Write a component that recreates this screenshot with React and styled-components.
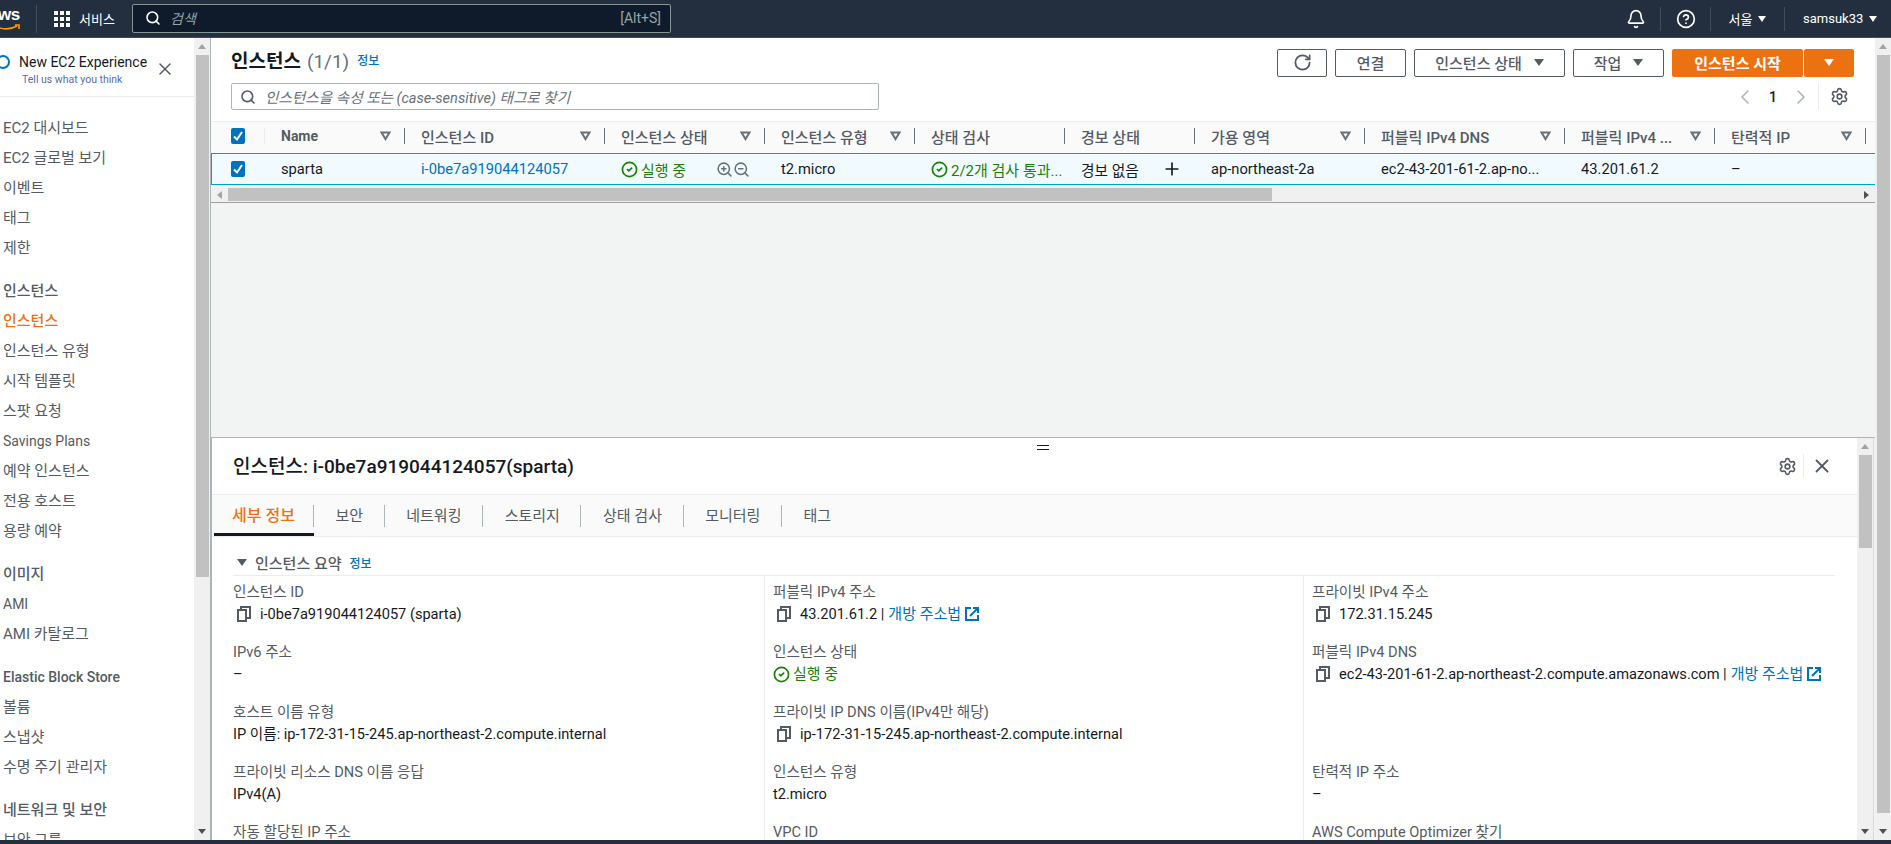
import React from 'react';
import styled, { createGlobalStyle } from 'styled-components';
import { Bell, CircleHelp, Search, X, RotateCw, Settings, ChevronLeft, ChevronRight, CircleCheck, ZoomIn, ZoomOut, Plus } from 'lucide-react';

const GlobalStyle = createGlobalStyle`
    html, body {
        margin: 0;
        padding: 0;
        overflow: hidden;
        background: #f2f3f3;
    }
    body, input, button {
        font-family: Roboto, "Noto Sans CJK KR", sans-serif;
        font-size: 14px;
        color: #16191f;
    }
    * { box-sizing: border-box; }
`

const Page = styled.div`
    width: 1891px;
    height: 844px;
    display: flex;
    flex-direction: column;
    overflow: hidden;
`

/* top navigation */
const NavBar = styled.div`
    height: 38px;
    flex: none;
    display: flex;
    align-items: center;
    background: #232f3e;
    border-bottom: 1px solid #414d5c;
    color: #fff;
`
const LogoBox = styled.div`
    width: 37px;
    height: 28px;
    flex: none;
    overflow: hidden;
    position: relative;
    border-right: 1px solid #414d5c;
    svg { position: absolute; left: 0; top: 19px; }
`
const LogoText = styled.span`
    display: block;
    margin: -2px 0 0 -11px;
    font: 700 17px/24px "Liberation Sans", sans-serif;
    letter-spacing: -0.5px;
`
const ServicesButton = styled.div`
    display: flex;
    align-items: center;
    gap: 9px;
    margin-left: 17px;
    width: 78px;
    font-size: 13px;
`
const GridIcon = styled.div`
    display: grid;
    grid-template-columns: repeat(3, 4px);
    grid-auto-rows: 4px;
    gap: 2px;
    i { background: #fff; }
`
const SearchBox = styled.div`
    width: 539px;
    height: 29px;
    display: flex;
    align-items: center;
    padding: 0 9px 0 12px;
    background: #0f1b2a;
    border: 1px solid #879596;
    border-radius: 2px;
    margin-bottom: 1px;
    span { color: #95a5a6; }
`
const SearchHint = styled.em`
    flex: 1;
    margin-left: 9px;
    color: #95a5a6;
    font-size: 14px;
`
const NavRight = styled.div`
    margin-left: auto;
    display: flex;
    align-items: center;
    height: 100%;
`
const NavCell = styled.div`
    height: 24px;
    width: ${p => p.$w}px;
    display: flex;
    align-items: center;
    justify-content: ${p => p.$last ? 'flex-start' : 'center'};
    padding-left: ${p => p.$last ? 18 : 0}px;
    gap: 6px;
    font-size: 13px;
    border-right: ${p => p.$last ? 'none' : '1px solid #414d5c'};
`
const Caret = styled.i`
    width: 0;
    height: 0;
    display: inline-block;
    border-left: ${p => p.$size || 4}px solid transparent;
    border-right: ${p => p.$size || 4}px solid transparent;
    border-top: ${p => (p.$size || 4) + 2}px solid ${p => p.$color || '#fff'};
`

/* page body */
const Body = styled.div`
    flex: 1;
    min-height: 0;
    display: flex;
`
const BottomStrip = styled.div`
    height: 4px;
    flex: none;
    background: #232f3e;
`
const Sidebar = styled.aside`
    width: 194px;
    flex: none;
    background: #fff;
    overflow: hidden;
`
const Banner = styled.div`
    height: 59px;
    display: flex;
    align-items: center;
    border-bottom: 1px solid #eaeded;
`
const BannerRing = styled.div`
    width: 14px;
    height: 14px;
    flex: none;
    margin: -11px 0 0 -4px;
    border: 2px solid #0073bb;
    border-radius: 50%;
`
const BannerText = styled.div`
    margin-left: 9px;
    padding-top: 6px;
    width: 136px;
    strong { display: block; font-weight: 400; font-size: 14px; line-height: 20px; color: #16191f; white-space: nowrap; }
    a { display: block; margin: 0 0 0 3px; font-size: 10.5px; line-height: 16px; color: #5a6bb0; white-space: nowrap; }
`
const BannerClose = styled.div`
    color: #545b64;
    display: flex;
    margin-top: 4px;
`
const SideNav = styled.nav`
    padding: 16px 0 0 3px;
`
const SideTitle = styled.div`
    height: 30px;
    line-height: 30px;
    margin-top: 13px;
    font-size: ${p => p.$latin ? 14 : 15}px;
    font-weight: 500;
    color: #545b64;
    white-space: nowrap;
`
const SideItem = styled.div`
    height: 30px;
    line-height: 30px;
    font-size: ${p => p.$latin ? 14 : 15}px;
    color: ${p => p.$active ? '#ec7211' : '#545b64'};
    font-weight: ${p => p.$active ? 500 : 400};
    white-space: nowrap;
`

/* browser style scrollbars */
const ScrollTrack = styled.div`
    width: ${p => p.$w || 16}px;
    flex: none;
    display: flex;
    flex-direction: column;
    align-items: center;
    background: #f0f0f0;
    border-right: ${p => p.$line ? '1px solid #aab7b8' : 'none'};
`
const ScrollThumb = styled.div`
    width: 13px;
    height: ${p => p.$h}px;
    background: #c1c1c1;
    flex: none;
`
const ScrollArrow = styled.div`
    height: ${p => p.$h || 17}px;
    flex: none;
    display: flex;
    align-items: center;
    justify-content: center;
    margin-top: ${p => p.$auto ? 'auto' : 0};
    i {
        width: 0;
        height: 0;
        border-left: 4px solid transparent;
        border-right: 4px solid transparent;
        ${p => p.$up ? 'border-bottom: 5px solid #a3a3a3;' : 'border-top: 5px solid #505050;'}
    }
`

/* content */
const Content = styled.main`
    flex: 1;
    min-width: 0;
    display: flex;
    flex-direction: column;
    background: #f2f3f3;
`
const TopPane = styled.section`
    height: 400px;
    flex: none;
    border-bottom: 1px solid #aab7b8;
`
const PaneHeader = styled.div`
    height: 83px;
    padding: 11px 21px 0 20px;
    display: flex;
    justify-content: space-between;
    background: #fff;
`
const HeaderLeft = styled.div`
    width: 648px;
`
const TitleRow = styled.div`
    height: 28px;
    display: flex;
    align-items: center;
    margin: -4px 0 10px;
`
const PageTitle = styled.h1`
    margin: 0;
    font-size: 19px;
    font-weight: 700;
    color: #16191f;
    span { font-weight: 400; color: #687078; margin-left: 6px; }
`
const InfoLink = styled.a`
    margin-left: ${p => p.$ml || 8}px;
    font-size: 12px;
    font-weight: 500;
    color: #0073bb;
`
const FilterBox = styled.div`
    height: 27px;
    display: flex;
    align-items: center;
    gap: 9px;
    padding-left: 8px;
    border: 1px solid #aab7b8;
    border-radius: 2px;
    color: #545b64;
    em { font-size: 14.6px; color: #687078; }
`
const HeaderRight = styled.div`
    display: flex;
    flex-direction: column;
    align-items: flex-end;
`
const ButtonRow = styled.div`
    display: flex;
    gap: 8px;
    height: 28px;
    margin-bottom: 6px;
`
const Button = styled.button`
    width: ${p => p.$w}px;
    height: 28px;
    display: flex;
    align-items: center;
    justify-content: center;
    gap: 12px;
    padding: 0 0 2px;
    background: #fff;
    border: 1px solid #545b64;
    border-radius: 2px;
    color: #545b64;
    font-size: 15px;
    font-weight: 500;
`
const SplitButton = styled.div`
    display: flex;
    gap: 1px;
`
const PrimaryButton = styled(Button)`
    background: #ec7211;
    border: none;
    color: #fff;
    font-weight: 700;
`
const Pagination = styled.div`
    height: 27px;
    display: flex;
    align-items: center;
    color: #16191f;
    padding-right: 5px;
    b { width: 32px; text-align: center; font-weight: 500; }
`
const PagerDivider = styled.i`
    width: 1px;
    height: 27px;
    margin: 0 11px 0 5px;
    background: #eaeded;
`

/* instance table */
const columns = '54px 140px 200px 160px 150px 150px 130px 170px 200px 150px 151px 9px'

const TableRow = styled.div`
    display: grid;
    grid-template-columns: ${columns};
    height: ${p => p.$h}px;
    align-items: center;
`
const HeadRow = styled(TableRow)`
    background: #fafafa;
    border-top: 1px solid #eaeded;
    padding-bottom: 3px;
`
const BodyRow = styled(TableRow)`
    background: #f1faff;
    border-top: 1px solid #00a1c9;
    border-bottom: 1px solid #00a1c9;
    border-left: 1px solid #00a1c9;
    font-size: 14.7px;
`
const CheckCell = styled.div`
    display: flex;
    align-items: center;
    padding-left: ${p => p.$pl || 20}px;
    height: 16px;
    border-right: ${p => p.$line ? '1px solid #eaeded' : 'none'};
`
const CheckBox = styled.div`
    width: 14px;
    height: 16px;
    display: flex;
    align-items: center;
    justify-content: center;
    background: #0073bb;
    border-radius: 2px;
`
const HeadCell = styled.div`
    height: 16px;
    display: flex;
    align-items: center;
    padding: 0 13px 0 16px;
    border-right: 1px solid #687078;
    color: #545b64;
    font-size: 15px;
    white-space: nowrap;
    span {
        flex: 1;
        font-weight: ${p => p.$latin ? 700 : 500};
        font-size: ${p => p.$latin ? 14 : 15}px;
    }
`
const Cell = styled.div`
    display: flex;
    align-items: center;
    padding-left: 15px;
    white-space: nowrap;
    color: ${p => p.$color || '#16191f'};
`
const StatusIcon = styled.span`
    display: flex;
    color: #1d8102;
    margin-right: ${p => p.$mr || 3}px;
`
const StatusText = styled.span`
    color: #1d8102;
    font-size: 15px;
`
const ZoomIcons = styled.span`
    display: flex;
    color: #687078;
    margin-left: 30px;
`
const PlusIcon = styled.span`
    display: flex;
    margin-left: 23px;
    color: #16191f;
`
const TableScroll = styled.div`
    height: 16px;
    margin-top: 2px;
    display: flex;
    align-items: center;
    background: #f0f0f0;
    border-bottom: 1px solid #a0a0a0;
`
const HArrow = styled.div`
    width: 17px;
    flex: none;
    display: flex;
    justify-content: center;
    margin-left: ${p => p.$auto ? 'auto' : 0};
    i {
        width: 0;
        height: 0;
        border-top: 4px solid transparent;
        border-bottom: 4px solid transparent;
        ${p => p.$left ? 'border-right: 5px solid #a3a3a3;' : 'border-left: 5px solid #505050;'}
    }
`
const HThumb = styled.div`
    width: 1044px;
    height: 13px;
    background: #c1c1c1;
`

/* detail panel */
const DetailPane = styled.section`
    flex: 1;
    min-height: 0;
    display: flex;
    margin-right: 1px;
    background: #fff;
    border-left: 1px solid #aab7b8;
    border-right: 1px solid #d5dbdb;
    position: relative;
`
const DragHandle = styled.div`
    position: absolute;
    left: 825px;
    top: 7px;
    width: 12px;
    height: 5px;
    border-top: 1px solid #16191f;
    border-bottom: 1px solid #16191f;
`
const DetailMain = styled.div`
    flex: 1;
    min-width: 0;
    overflow: hidden;
`
const DetailHeader = styled.div`
    height: 56px;
    display: flex;
    align-items: center;
    padding: 0 24px 0 21px;
`
const DetailTitle = styled.h2`
    margin: -3px 0 0;
    flex: 1;
    font-size: 19px;
    font-weight: 500;
    color: #16191f;
`
const HeaderIcons = styled.div`
    display: flex;
    align-items: center;
    color: #545b64;
`
const IconDivider = styled.i`
    width: 1px;
    height: 24px;
    margin: 0 7px 0 6px;
    background: #eaeded;
`
const Tabs = styled.div`
    height: 43px;
    display: flex;
    align-items: center;
    padding-left: 2px;
    background: #fafafa;
    border-top: 1px solid #eaeded;
    border-bottom: 1px solid #eaeded;
`
const Tab = styled.div`
    height: 100%;
    padding: 0 ${p => p.$active ? '19px 0 18px' : '21.6px'};
    display: flex;
    align-items: center;
    position: relative;
    font-size: ${p => p.$active ? 16 : 15}px;
    font-weight: ${p => p.$active ? 500 : 400};
    color: ${p => p.$active ? '#ec7211' : '#545b64'};
    border-bottom: 3px solid ${p => p.$active ? '#16191f' : 'transparent'};
    &:not(:last-child)::after {
        content: "";
        position: absolute;
        right: 0;
        top: 10px;
        height: 22px;
        width: 1px;
        background: #aab7b8;
    }
`
const Summary = styled.div`
    padding: 13px 22px 0 21px;
`
const SummaryHead = styled.div`
    height: 25px;
    display: flex;
    align-items: center;
    padding-left: 4px;
    font-size: 15px;
    font-weight: 500;
    color: #545b64;
    i { margin-right: 8px; }
`
const FieldGrid = styled.div`
    display: grid;
    grid-template-columns: 531px 539px 1fr;
    border-top: 1px solid #eaeded;
    padding-top: 5px;
`
const FieldCol = styled.div`
    padding-left: ${p => p.$first ? 0 : 8}px;
    border-left: ${p => p.$first ? 'none' : '1px solid #eaeded'};
    margin-top: -5px;
    padding-top: 5px;
`
const Field = styled.div`
    height: 60px;
    white-space: nowrap;
`
const FieldLabel = styled.div`
    height: 22px;
    padding-top: 1px;
    line-height: 21px;
    color: #545b64;
    font-size: 14.6px;
`
const FieldValue = styled.div`
    height: 22px;
    line-height: 22px;
    display: flex;
    align-items: center;
    color: #16191f;
    font-size: 14.6px;
`
const CopyWrap = styled.span`
    display: flex;
    margin: 0 9px 0 4px;
    color: #545b64;
`
const OpenLink = styled.a`
    display: inline-flex;
    align-items: center;
    gap: 4px;
    margin-left: 4px;
    font-size: 15px;
    color: #0073bb;
`

const CopyIcon = () => (
    <svg width="14" height="16" viewBox="0 0 14 16" fill="none" stroke="currentColor" strokeWidth="2">
        <rect x="1" y="4" width="8" height="11" />
        <path d="M4 4V1h9v11H9" />
    </svg>
)

const ExternalIcon = () => (
    <svg width="14" height="14" viewBox="0 0 14 14" fill="none" stroke="currentColor" strokeWidth="2">
        <path d="M6 1H1v12h12V8" />
        <path d="M5 9l8-8M8 1h5v5" />
    </svg>
)

const FilterIcon = () => (
    <svg width="11" height="10" viewBox="0 0 11 10" fill="none" stroke="#687078" strokeWidth="2">
        <path d="M1.5 1.5h8L5.5 8z" />
    </svg>
)

const TickIcon = () => (
    <svg width="12" height="12" viewBox="0 0 12 12" fill="none" stroke="#fff" strokeWidth="2">
        <path d="M2 6.5L5 9.5L10 2" />
    </svg>
)

const Running = () => (
    <>
        <StatusIcon><CircleCheck size={17} strokeWidth={2.4} /></StatusIcon>
        <StatusText>실행 중</StatusText>
    </>
)

const headers = [
    ['Name', true], ['인스턴스 ID', true], ['인스턴스 상태', true], ['인스턴스 유형', true],
    ['상태 검사', false], ['경보 상태', false], ['가용 영역', true], ['퍼블릭 IPv4 DNS', true],
    ['퍼블릭 IPv4 ...', true], ['탄력적 IP', true],
]

const latinLabels = ['Savings Plans', 'AMI', 'Elastic Block Store']

const sideGroups = [
    { items: ['EC2 대시보드', 'EC2 글로벌 보기', '이벤트', '태그', '제한'] },
    { title: '인스턴스', items: ['인스턴스', '인스턴스 유형', '시작 템플릿', '스팟 요청', 'Savings Plans', '예약 인스턴스', '전용 호스트', '용량 예약'] },
    { title: '이미지', items: ['AMI', 'AMI 카탈로그'] },
    { title: 'Elastic Block Store', items: ['볼륨', '스냅샷', '수명 주기 관리자'] },
    { title: '네트워크 및 보안', items: ['보안 그룹'] },
]

const tabs = ['세부 정보', '보안', '네트워킹', '스토리지', '상태 검사', '모니터링', '태그']

const dns = 'ec2-43-201-61-2.ap-northeast-2.compute.amazonaws.com'
const privateDns = 'ip-172-31-15-245.ap-northeast-2.compute.internal'

const fieldCols = [
    [
        { label: '인스턴스 ID', value: 'i-0be7a919044124057 (sparta)', copy: true },
        { label: 'IPv6 주소', value: '–' },
        { label: '호스트 이름 유형', value: `IP 이름: ${privateDns}` },
        { label: '프라이빗 리소스 DNS 이름 응답', value: 'IPv4(A)' },
        { label: '자동 할당된 IP 주소' },
    ],
    [
        { label: '퍼블릭 IPv4 주소', value: '43.201.61.2 |', copy: true, open: true },
        { label: '인스턴스 상태', running: true },
        { label: '프라이빗 IP DNS 이름(IPv4만 해당)', value: privateDns, copy: true },
        { label: '인스턴스 유형', value: 't2.micro' },
        { label: 'VPC ID' },
    ],
    [
        { label: '프라이빗 IPv4 주소', value: '172.31.15.245', copy: true },
        { label: '퍼블릭 IPv4 DNS', value: `${dns} |`, copy: true, open: true },
        {},
        { label: '탄력적 IP 주소', value: '–' },
        { label: 'AWS Compute Optimizer 찾기' },
    ],
]

const App = () => {
    return (
        <Page>
            <GlobalStyle />
            <NavBar>
                <LogoBox>
                    <LogoText>aws</LogoText>
                    <svg width="21" height="7" viewBox="0 0 21 7" fill="none" stroke="#ff9900" strokeWidth="1.6">
                        <path d="M-6 1c7 5 16 5 23 1M15 1h4v4" />
                    </svg>
                </LogoBox>
                <ServicesButton>
                    <GridIcon>{Array.from({ length: 9 }, (_, i) => <i key={i} />)}</GridIcon>
                    서비스
                </ServicesButton>
                <SearchBox>
                    <Search size={16} strokeWidth={2.4} color="#fff" />
                    <SearchHint>검색</SearchHint>
                    <span>[Alt+S]</span>
                </SearchBox>
                <NavRight>
                    <NavCell $w={50}><Bell size={20} /></NavCell>
                    <NavCell $w={50}><CircleHelp size={20} /></NavCell>
                    <NavCell $w={74}>서울 <Caret /></NavCell>
                    <NavCell $w={106} $last>samsuk33 <Caret /></NavCell>
                </NavRight>
            </NavBar>
            <Body>
                <Sidebar>
                    <Banner>
                        <BannerRing />
                        <BannerText>
                            <strong>New EC2 Experience</strong>
                            <a>Tell us what you think</a>
                        </BannerText>
                        <BannerClose><X size={20} strokeWidth={1.8} /></BannerClose>
                    </Banner>
                    <SideNav>
                        {sideGroups.map((group, i) => (
                            <div key={i}>
                                {group.title && <SideTitle $latin={latinLabels.includes(group.title)}>{group.title}</SideTitle>}
                                {group.items.map((item, j) => (
                                    <SideItem key={item} $active={i === 1 && j === 0} $latin={latinLabels.includes(item)}>{item}</SideItem>
                                ))}
                            </div>
                        ))}
                    </SideNav>
                </Sidebar>
                <ScrollTrack $w={17} $line>
                    <ScrollArrow $up><i /></ScrollArrow>
                    <ScrollThumb $h={522} />
                    <ScrollArrow $auto $down><i /></ScrollArrow>
                </ScrollTrack>
                <Content>
                    <TopPane>
                        <PaneHeader>
                            <HeaderLeft>
                                <TitleRow>
                                    <PageTitle>인스턴스<span>(1/1)</span></PageTitle>
                                    <InfoLink>정보</InfoLink>
                                </TitleRow>
                                <FilterBox>
                                    <Search size={16} strokeWidth={2.4} />
                                    <em>인스턴스을 속성 또는 (case-sensitive) 태그로 찾기</em>
                                </FilterBox>
                            </HeaderLeft>
                            <HeaderRight>
                                <ButtonRow>
                                    <Button $w={50}><RotateCw size={19} strokeWidth={2.2} /></Button>
                                    <Button $w={71}>연결</Button>
                                    <Button $w={151}>인스턴스 상태 <Caret $size={5} $color="#545b64" /></Button>
                                    <Button $w={91}>작업 <Caret $size={5} $color="#545b64" /></Button>
                                    <SplitButton>
                                        <PrimaryButton $w={131}>인스턴스 시작</PrimaryButton>
                                        <PrimaryButton $w={50}><Caret $size={5} /></PrimaryButton>
                                    </SplitButton>
                                </ButtonRow>
                                <Pagination>
                                    <ChevronLeft size={24} strokeWidth={1.6} color="#aab7b8" />
                                    <b>1</b>
                                    <ChevronRight size={24} strokeWidth={1.6} color="#aab7b8" />
                                    <PagerDivider />
                                    <Settings size={19} color="#545b64" />
                                </Pagination>
                            </HeaderRight>
                        </PaneHeader>
                        <HeadRow $h={32}>
                            <CheckCell $line><CheckBox><TickIcon /></CheckBox></CheckCell>
                            {headers.map(([name, filter]) => (
                                <HeadCell key={name} $latin={name === 'Name'}>
                                    <span>{name}</span>
                                    {filter && <FilterIcon />}
                                </HeadCell>
                            ))}
                        </HeadRow>
                        <BodyRow $h={32}>
                            <CheckCell $pl={19}><CheckBox><TickIcon /></CheckBox></CheckCell>
                            <Cell>sparta</Cell>
                            <Cell $color="#0073bb">i-0be7a919044124057</Cell>
                            <Cell>
                                <Running />
                                <ZoomIcons><ZoomIn size={17} strokeWidth={2.2} /><ZoomOut size={17} strokeWidth={2.2} /></ZoomIcons>
                            </Cell>
                            <Cell>t2.micro</Cell>
                            <Cell $color="#1d8102">
                                <StatusIcon><CircleCheck size={17} strokeWidth={2.4} /></StatusIcon>
                                <StatusText>2/2개 검사 통과...</StatusText>
                            </Cell>
                            <Cell>경보 없음<PlusIcon><Plus size={20} strokeWidth={2} /></PlusIcon></Cell>
                            <Cell>ap-northeast-2a</Cell>
                            <Cell>ec2-43-201-61-2.ap-no...</Cell>
                            <Cell>43.201.61.2</Cell>
                            <Cell>–</Cell>
                        </BodyRow>
                        <TableScroll>
                            <HArrow $left><i /></HArrow>
                            <HThumb />
                            <HArrow $auto><i /></HArrow>
                        </TableScroll>
                    </TopPane>
                    <DetailPane>
                        <DragHandle />
                        <DetailMain>
                            <DetailHeader>
                                <DetailTitle>인스턴스: i-0be7a919044124057(sparta)</DetailTitle>
                                <HeaderIcons>
                                    <Settings size={19} />
                                    <IconDivider />
                                    <X size={22} />
                                </HeaderIcons>
                            </DetailHeader>
                            <Tabs>
                                {tabs.map((tab, i) => <Tab key={tab} $active={i === 0}>{tab}</Tab>)}
                            </Tabs>
                            <Summary>
                                <SummaryHead>
                                    <Caret $size={5} $color="#545b64" />
                                    인스턴스 요약
                                    <InfoLink $ml={8}>정보</InfoLink>
                                </SummaryHead>
                                <FieldGrid>
                                    {fieldCols.map((col, c) => (
                                        <FieldCol key={c} $first={c === 0}>
                                            {col.map((f, r) => (
                                                <Field key={r}>
                                                    <FieldLabel>{f.label}</FieldLabel>
                                                    <FieldValue>
                                                        {f.copy && <CopyWrap><CopyIcon /></CopyWrap>}
                                                        {f.value}
                                                        {f.running && <Running />}
                                                        {f.open && <OpenLink>개방 주소법 <ExternalIcon /></OpenLink>}
                                                    </FieldValue>
                                                </Field>
                                            ))}
                                        </FieldCol>
                                    ))}
                                </FieldGrid>
                            </Summary>
                        </DetailMain>
                        <ScrollTrack>
                            <ScrollArrow $up><i /></ScrollArrow>
                            <ScrollThumb $h={93} />
                            <ScrollArrow $auto $down><i /></ScrollArrow>
                        </ScrollTrack>
                    </DetailPane>
                </Content>
                <ScrollTrack>
                    <ScrollArrow $up><i /></ScrollArrow>
                    <ScrollThumb $h={758} />
                    <ScrollArrow $auto $down><i /></ScrollArrow>
                </ScrollTrack>
            </Body>
            <BottomStrip />
        </Page>
    )
}

export default App
